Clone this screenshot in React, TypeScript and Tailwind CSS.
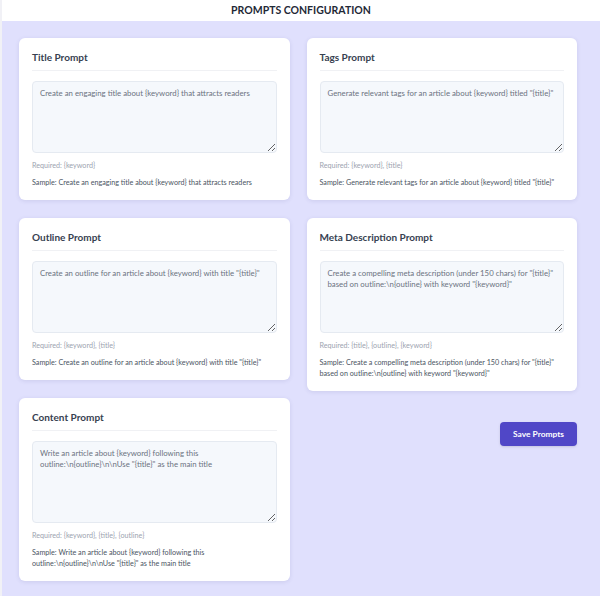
import React, { useState } from 'react';

type PromptKey = 'title' | 'tags' | 'outline' | 'meta' | 'content';

type PromptDef = {
  key: PromptKey;
  label: string;
  required: string;
  value: string;
  tall?: boolean;
};

const PROMPTS: Record<PromptKey, PromptDef> = {
  title: {
    key: 'title',
    label: 'Title Prompt',
    required: '{keyword}',
    value: 'Create an engaging title about {keyword} that attracts readers',
  },
  tags: {
    key: 'tags',
    label: 'Tags Prompt',
    required: '{keyword}, {title}',
    value: 'Generate relevant tags for an article about {keyword} titled "{title}"',
  },
  outline: {
    key: 'outline',
    label: 'Outline Prompt',
    required: '{keyword}, {title}',
    value: 'Create an outline for an article about {keyword} with title "{title}"',
  },
  meta: {
    key: 'meta',
    label: 'Meta Description Prompt',
    required: '{title}, {outline}, {keyword}',
    value: 'Create a compelling meta description (under 150 chars) for "{title}" based on outline:\\n{outline} with keyword "{keyword}"',
  },
  content: {
    key: 'content',
    label: 'Content Prompt',
    required: '{keyword}, {title}, {outline}',
    value: 'Write an article about {keyword} following this outline:\\n{outline}\\n\\nUse "{title}" as the main title',
    tall: true,
  },
};

const PromptCard: React.FC<{
  def: PromptDef;
  value: string;
  onChange: (v: string) => void;
}> = ({ def, value, onChange }) => (
  <div className="bg-white rounded-[6px] shadow-[0_1px_4px_rgba(60,60,120,0.12)] px-[13px] pt-[13px] pb-[12px]">
    <h3 className="text-[10px] leading-[12px] font-bold text-[#374151] pb-[7px] border-b border-[#f0f1f4]">
      {def.label}
    </h3>
    <textarea
      className={`mt-[10px] block w-full ${def.tall ? 'h-[82px]' : 'h-[72px]'} rounded-[4px] border border-[#e5eaf1] bg-[#f5f8fc] px-[7px] py-[6px] text-[7.8px] leading-[11px] text-[#6b7280] outline-none resize-y`}
      value={value}
      onChange={e => onChange(e.target.value)}
    />
    <p className="mt-[7px] text-[7.2px] leading-[11px] text-[#9ca3af]">Required: {def.required}</p>
    <p className="mt-[6px] text-[7.2px] leading-[11px] text-[#4b5563]">Sample: {def.value}</p>
  </div>
);

const App: React.FC = () => {
  const [values, setValues] = useState<Record<PromptKey, string>>({
    title: PROMPTS.title.value,
    tags: PROMPTS.tags.value,
    outline: PROMPTS.outline.value,
    meta: PROMPTS.meta.value,
    content: PROMPTS.content.value,
  });

  const card = (k: PromptKey) => (
    <PromptCard def={PROMPTS[k]} value={values[k]} onChange={v => setValues({ ...values, [k]: v })} />
  );

  return (
    <div className="min-h-[596px] bg-[#e0e0fd] border-l-2 border-[#f1f1f6] font-['Lato',sans-serif]">
      <header className="h-[21px] bg-white flex items-center justify-center">
        <h1 className="text-[10.5px] font-bold uppercase text-[#1f2937]">Prompts Configuration</h1>
      </header>

      <div className="flex gap-[17px] pt-[17px] pl-[17px] pr-[23px] pb-[16px]">
        <div className="flex-1 flex flex-col gap-[18px]">
          {card('title')}
          {card('outline')}
          {card('content')}
        </div>
        <div className="flex-1 flex flex-col gap-[18px]">
          {card('tags')}
          {card('meta')}
          <button className="mt-[13px] self-end h-[24px] w-[77px] rounded-[4px] bg-[#5047c7] text-white text-[8.4px] font-bold shadow-sm">
            Save Prompts
          </button>
        </div>
      </div>
    </div>
  );
};

export default App;
